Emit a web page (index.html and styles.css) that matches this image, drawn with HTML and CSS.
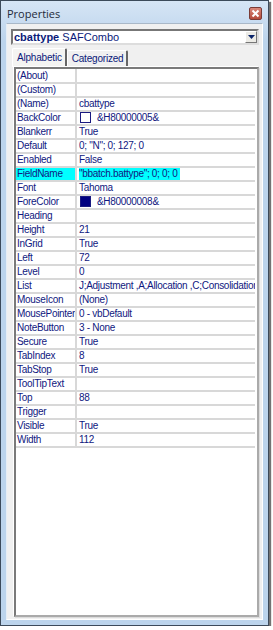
FILE: index.html
```html
<!DOCTYPE html>
<html lang="en">
  <head>
    <meta charset="UTF-8" />
    <title>Properties</title>
    <link rel="stylesheet" href="styles.css">
  </head>
  <body>
    <div class="window">
      <div class="titlebar">
        <span class="title">Properties</span>
        <span class="close">
          <svg width="9" height="9" viewBox="0 0 9 9"><path d="M1.5 1.5 L7.5 7.5 M7.5 1.5 L1.5 7.5" stroke="#fff" stroke-width="2"/></svg>
        </span>
      </div>
      <div class="client">
        <div class="combo">
          <span class="obj"><b>cbattype</b> SAFCombo</span>
          <span class="drop">
            <svg width="7" height="4" viewBox="0 0 7 4"><path d="M0 0 H7 L3.5 4 Z" fill="#0a246a"/></svg>
          </span>
        </div>
        <div class="tabs">
          <div class="tab active">Alphabetic</div>
          <div class="tab">Categorized</div>
        </div>
        <div class="grid-frame">
          <table class="props">
            <tr><td>(About)</td><td></td></tr>
            <tr><td>(Custom)</td><td></td></tr>
            <tr><td>(Name)</td><td>cbattype</td></tr>
            <tr><td>BackColor</td><td><span class="swatch"></span>&amp;H80000005&amp;</td></tr>
            <tr><td>Blankerr</td><td>True</td></tr>
            <tr><td>Default</td><td>0; "N"; 0; 127; 0</td></tr>
            <tr><td>Enabled</td><td>False</td></tr>
            <tr class="selected"><td>FieldName</td><td><span class="hl">"bbatch.battype"; 0; 0; 0</span></td></tr>
            <tr><td>Font</td><td>Tahoma</td></tr>
            <tr><td>ForeColor</td><td><span class="swatch dark"></span>&amp;H80000008&amp;</td></tr>
            <tr><td>Heading</td><td></td></tr>
            <tr><td>Height</td><td>21</td></tr>
            <tr><td>InGrid</td><td>True</td></tr>
            <tr><td>Left</td><td>72</td></tr>
            <tr><td>Level</td><td>0</td></tr>
            <tr><td>List</td><td>J;Adjustment ,A;Allocation ,C;Consolidation</td></tr>
            <tr><td>MouseIcon</td><td>(None)</td></tr>
            <tr><td>MousePointer</td><td>0 - vbDefault</td></tr>
            <tr><td>NoteButton</td><td>3 - None</td></tr>
            <tr><td>Secure</td><td>True</td></tr>
            <tr><td>TabIndex</td><td>8</td></tr>
            <tr><td>TabStop</td><td>True</td></tr>
            <tr><td>ToolTipText</td><td></td></tr>
            <tr><td>Top</td><td>88</td></tr>
            <tr><td>Trigger</td><td></td></tr>
            <tr><td>Visible</td><td>True</td></tr>
            <tr><td>Width</td><td>112</td></tr>
          </table>
        </div>
      </div>
    </div>
  </body>
</html>
```

FILE: styles.css
```css
* {
  margin: 0;
  padding: 0;
  box-sizing: border-box;
}
body {
  background-color: #fff;
  font-family: "Liberation Sans", Arial, sans-serif;
  font-size: 10px;
}

.window {
  width: 269px;
  height: 626px;
  display: flex;
  flex-direction: column;
  background: linear-gradient(#d6e5f5, #bcd4ec 40px);
  border: 1px solid #3c4a5a;
  box-shadow: 2px 2px 1px rgba(0, 0, 0, 0.55);
  padding: 0 5px 5px;
}

.titlebar {
  height: 22px;
  display: flex;
  justify-content: space-between;
  align-items: center;
  padding: 2px 0 0 1px;
}
.title {
  font-family: "Open Sans", sans-serif;
  font-size: 11px;
  color: #1e2a3a;
}
.close {
  width: 13px;
  height: 13px;
  margin-right: 1px;
  display: flex;
  justify-content: center;
  align-items: center;
  background: linear-gradient(#d8877a, #b44a3a);
  border: 1px solid #7a3b36;
  border-radius: 2px;
}

.client {
  flex: 1;
  display: flex;
  flex-direction: column;
  background-color: #f0f0f0;
  border: 1px solid #fff;
  border-top-color: #a9b8c8;
  border-left-color: #e6eef6;
  padding: 5px 3px 2px 4px;
}

.combo {
  height: 16px;
  display: flex;
  justify-content: space-between;
  align-items: center;
  background-color: #fff;
  border: 2px solid #777;
  border-right-color: #ddd;
  border-bottom-color: #ddd;
  padding-left: 1px;
  color: #0a1a7a;
  font-size: 11px;
}
.combo b {
  font-weight: bold;
}
.drop {
  width: 12px;
  height: 12px;
  display: flex;
  justify-content: center;
  align-items: center;
  background-color: #ecebe6;
  border: 1px solid #fff;
  border-right-color: #777;
  border-bottom-color: #777;
}

.tabs {
  display: flex;
  align-items: flex-end;
  height: 19px;
  margin-top: 3px;
  padding-left: 1px;
}
.tab {
  height: 17px;
  padding: 2px 3px 0 4px;
  color: #0a1a7a;
  font-size: 10px;
  letter-spacing: -0.2px;
  border: 1px solid #fff;
  border-right: 2px solid #666;
  border-bottom: none;
  border-radius: 2px 2px 0 0;
}
.tab.active {
  height: 19px;
  padding-top: 3px;
  background-color: #f4f4f2;
}

.grid-frame {
  flex: 1;
  margin: 0 0 0 3px;
  background-color: #fff;
  border: 2px solid #7a7a7a;
  border-right-color: #aaa;
  border-bottom-color: #aaa;
  box-shadow: 1px 1px 0 #dcdcdc, -1px -1px 0 #fff;
  padding-right: 2px;
}

.props {
  width: 100%;
  border-collapse: collapse;
  table-layout: fixed;
  color: #101880;
  letter-spacing: -0.3px;
}
.props td {
  height: 14px;
  line-height: 12px;
  padding: 0 0 0 1px;
  white-space: nowrap;
  overflow: hidden;
  border-bottom: 2px solid #d8d8d8;
}
.props td:first-child {
  width: 60px;
  border-right: 2px solid #d8d8d8;
}
.props td:last-child {
  padding-left: 2px;
}
.props .selected td:first-child {
  background-color: #00ffff;
}
.hl {
  background-color: #00ffff;
  padding: 1px 2px 1px 0;
}

.swatch {
  display: inline-block;
  width: 11px;
  height: 11px;
  margin: 0 6px 0 1px;
  vertical-align: -2px;
  border: 1px solid #1a1a80;
  background-color: #fff;
}
.swatch.dark {
  background-color: #000080;
}
```
